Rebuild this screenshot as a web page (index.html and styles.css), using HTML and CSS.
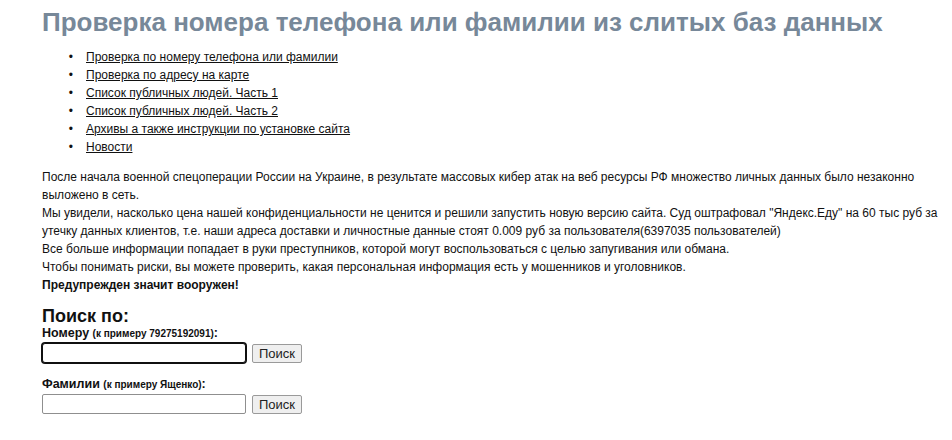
FILE: index.html
```html
<!DOCTYPE html>
<html lang="ru">
<head>
    <meta charset="UTF-8">
    <meta name="viewport" content="width=device-width, initial-scale=1.0">
    <title>Проверка номера телефона или фамилии</title>
    <link rel="stylesheet" href="styles.css">
</head>
<body>
    <div class="page">
        <h1 class="page-title">Проверка номера телефона или фамилии из слитых баз данных</h1>

        <!-- Навигация -->
        <ul class="nav-list">
            <li><a href="#">Проверка по номеру телефона или фамилии</a></li>
            <li><a href="#">Проверка по адресу на карте</a></li>
            <li><a href="#">Список публичных людей. Часть 1</a></li>
            <li><a href="#">Список публичных людей. Часть 2</a></li>
            <li><a href="#">Архивы а также инструкции по установке сайта</a></li>
            <li><a href="#">Новости</a></li>
        </ul>

        <p class="intro">
            После начала военной спецоперации России на Украине, в результате массовых кибер атак на веб ресурсы РФ множество личных данных было незаконно выложено в сеть.<br>
            Мы увидели, насколько цена нашей конфиденциальности не ценится и решили запустить новую версию сайта. Суд оштрафовал "Яндекс.Еду" на 60 тыс руб за утечку данных клиентов, т.е. наши адреса доставки и личностные данные стоят 0.009 руб за пользователя(6397035 пользователей)<br>
            Все больше информации попадает в руки преступников, которой могут воспользоваться с целью запугивания или обмана.<br>
            Чтобы понимать риски, вы можете проверить, какая персональная информация есть у мошенников и уголовников.<br>
            <b>Предупрежден значит вооружен!</b>
        </p>

        <!-- Поиск -->
        <div class="search-title">Поиск по:</div>

        <form class="search-form" onsubmit="return false">
            <label class="search-label" for="phone">Номеру <small>(к примеру 79275192091)</small>:</label>
            <div class="search-row">
                <input type="text" id="phone" class="search-input is-focused">
                <button type="submit" class="search-btn">Поиск</button>
            </div>
        </form>

        <form class="search-form" onsubmit="return false">
            <label class="search-label" for="surname">Фамилии <small>(к примеру Ященко)</small>:</label>
            <div class="search-row">
                <input type="text" id="surname" class="search-input">
                <button type="submit" class="search-btn">Поиск</button>
            </div>
        </form>
    </div>
</body>
</html>
```

FILE: styles.css
```css
/* Общие стили */
body {
    margin: 0;
    font-family: "Liberation Sans", Arial, sans-serif;
    font-size: 12px;
    line-height: 18px;
    color: #111;
    background: #fff;
}

.page {
    padding: 0 8px 0 42px;
}

.page-title {
    margin: 6px 0 0;
    font-size: 26px;
    line-height: 32px;
    font-weight: bold;
    color: #778899;
}

.nav-list {
    margin: 10px 0 12px;
    padding-left: 44px;
}

.nav-list li::marker {
    content: "•\2003\200A";
}

.nav-list a {
    color: #111;
    text-decoration: underline;
}

.intro {
    margin: 0;
}

/* Форма поиска */
.search-title {
    margin-top: 12px;
    font-size: 18px;
    line-height: 20px;
    font-weight: bold;
}

.search-form {
    margin: 0 0 14px;
}

.search-label {
    display: block;
    font-size: 12.5px;
    line-height: 14px;
    font-weight: bold;
    margin-bottom: 2px;
}

.search-label small {
    font-size: 10px;
}

.search-row {
    display: flex;
    align-items: center;
    gap: 6px;
}

.search-input {
    box-sizing: border-box;
    width: 204px;
    height: 20px;
    margin: 0;
    padding: 1px 2px;
    border: 1px solid #8f8f8f;
    border-radius: 2px;
    font: 13px "Liberation Sans", Arial, sans-serif;
    outline: none;
}

.search-input.is-focused {
    border-color: #101010;
    border-radius: 3px;
    box-shadow: 0 0 0 1px #101010;
}

.search-btn {
    box-sizing: border-box;
    height: 19px;
    margin: 0;
    padding: 0 6px;
    border: 1px solid #9a9a9a;
    border-radius: 2px;
    background: #efefef;
    color: #222;
    font: 13px "Liberation Sans", Arial, sans-serif;
    line-height: 15px;
}
```
